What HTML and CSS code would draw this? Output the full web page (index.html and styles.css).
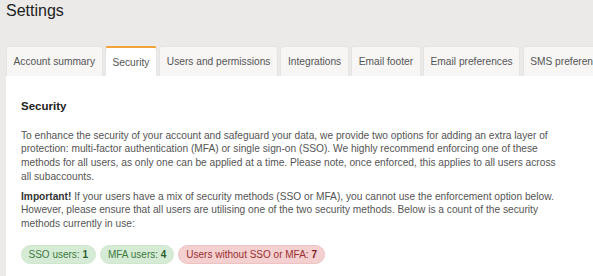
FILE: index.html
```html
<!DOCTYPE html>
<html>
<head>
<meta charset="utf-8">
<link rel="stylesheet" href="styles.css">
</head>
<body>
<div class="page">
  <h1 class="title">Settings</h1>
  <div class="tabs">
    <div class="tab">Account summary</div>
    <div class="tab active">Security</div>
    <div class="tab">Users and permissions</div>
    <div class="tab">Integrations</div>
    <div class="tab">Email footer</div>
    <div class="tab">Email preferences</div>
    <div class="tab">SMS preferences</div>
  </div>
  <div class="panel">
    <h2 class="heading">Security</h2>
    <p class="text">To enhance the security of your account and safeguard your data, we provide two options for adding an extra layer of protection: multi-factor authentication (MFA) or single sign-on (SSO). We highly recommend enforcing one of these methods for all users, as only one can be applied at a time. Please note, once enforced, this applies to all users across all subaccounts.</p>
    <p class="text second"><strong>Important!</strong> If your users have a mix of security methods (SSO or MFA), you cannot use the enforcement option below. However, please ensure that all users are utilising one of the two security methods. Below is a count of the security methods currently in use:</p>
    <div class="badges">
      <span class="badge green">SSO users: <b>1</b></span>
      <span class="badge green">MFA users: <b>4</b></span>
      <span class="badge red">Users without SSO or MFA: <b>7</b></span>
    </div>
  </div>
</div>
</body>
</html>
```
FILE: styles.css
```css
html, body {
  margin: 0;
  padding: 0;
  background: #ebeae9;
  font-family: "Liberation Sans", Arial, sans-serif;
  overflow: hidden;
}
.page {
  width: 593px;
  height: 276px;
  overflow: hidden;
}
.title {
  margin: 0;
  padding: 2px 0 0 6px;
  font-size: 16px;
  line-height: 18px;
  font-weight: normal;
  color: #222;
}
.tabs {
  display: flex;
  gap: 2.5px;
  margin: 26px 0 0 6px;
  white-space: nowrap;
}
.tab {
  flex-shrink: 0;
  height: 30px;
  box-sizing: border-box;
  padding: 0 6.5px;
  display: flex;
  align-items: center;
  font-size: 10.2px;
  color: #555;
  background: #f7f6f5;
  border: 1px solid #e6e4e2;
  border-bottom: none;
  border-radius: 3px 3px 0 0;
}
.tab.active {
  background: #fff;
  border-top: 2px solid #f2a43a;
  border-color: #f2a43a #e6e4e2 #fff #e6e4e2;
  color: #555;
}
.panel {
  margin-left: 6px;
  background: #fff;
  height: 210px;
  padding: 24px 15px 0 15px;
}
.heading {
  margin: 0;
  font-size: 11.5px;
  line-height: 13px;
  font-weight: bold;
  color: #222;
}
.text {
  margin: 15.6px 0 0 0;
  max-width: 546px;
  font-size: 10.2px;
  line-height: 13.7px;
  color: #555;
}
.text.second {
  margin-top: 6.2px;
}
.text strong {
  color: #333;
}
.badges {
  display: flex;
  gap: 4px;
  margin-top: 14px;
  margin-left: -0.5px;
}
.badge {
  height: 19px;
  box-sizing: border-box;
  padding: 0 7px;
  display: flex;
  align-items: center;
  border-radius: 10px;
  font-size: 10px;
  white-space: pre;
}
.badge b {
  font-weight: bold;
}
.badge.green {
  background: #d6ebd5;
  color: #3d7a3e;
  border: 1px solid #cfe6cd;
}
.badge.green b {
  color: #2c5e2d;
}
.badge.red {
  background: #f4d0d0;
  color: #9b2f2f;
  border: 1px solid #ecc2c2;
}
.badge.red b {
  color: #7d1f1f;
}
```
